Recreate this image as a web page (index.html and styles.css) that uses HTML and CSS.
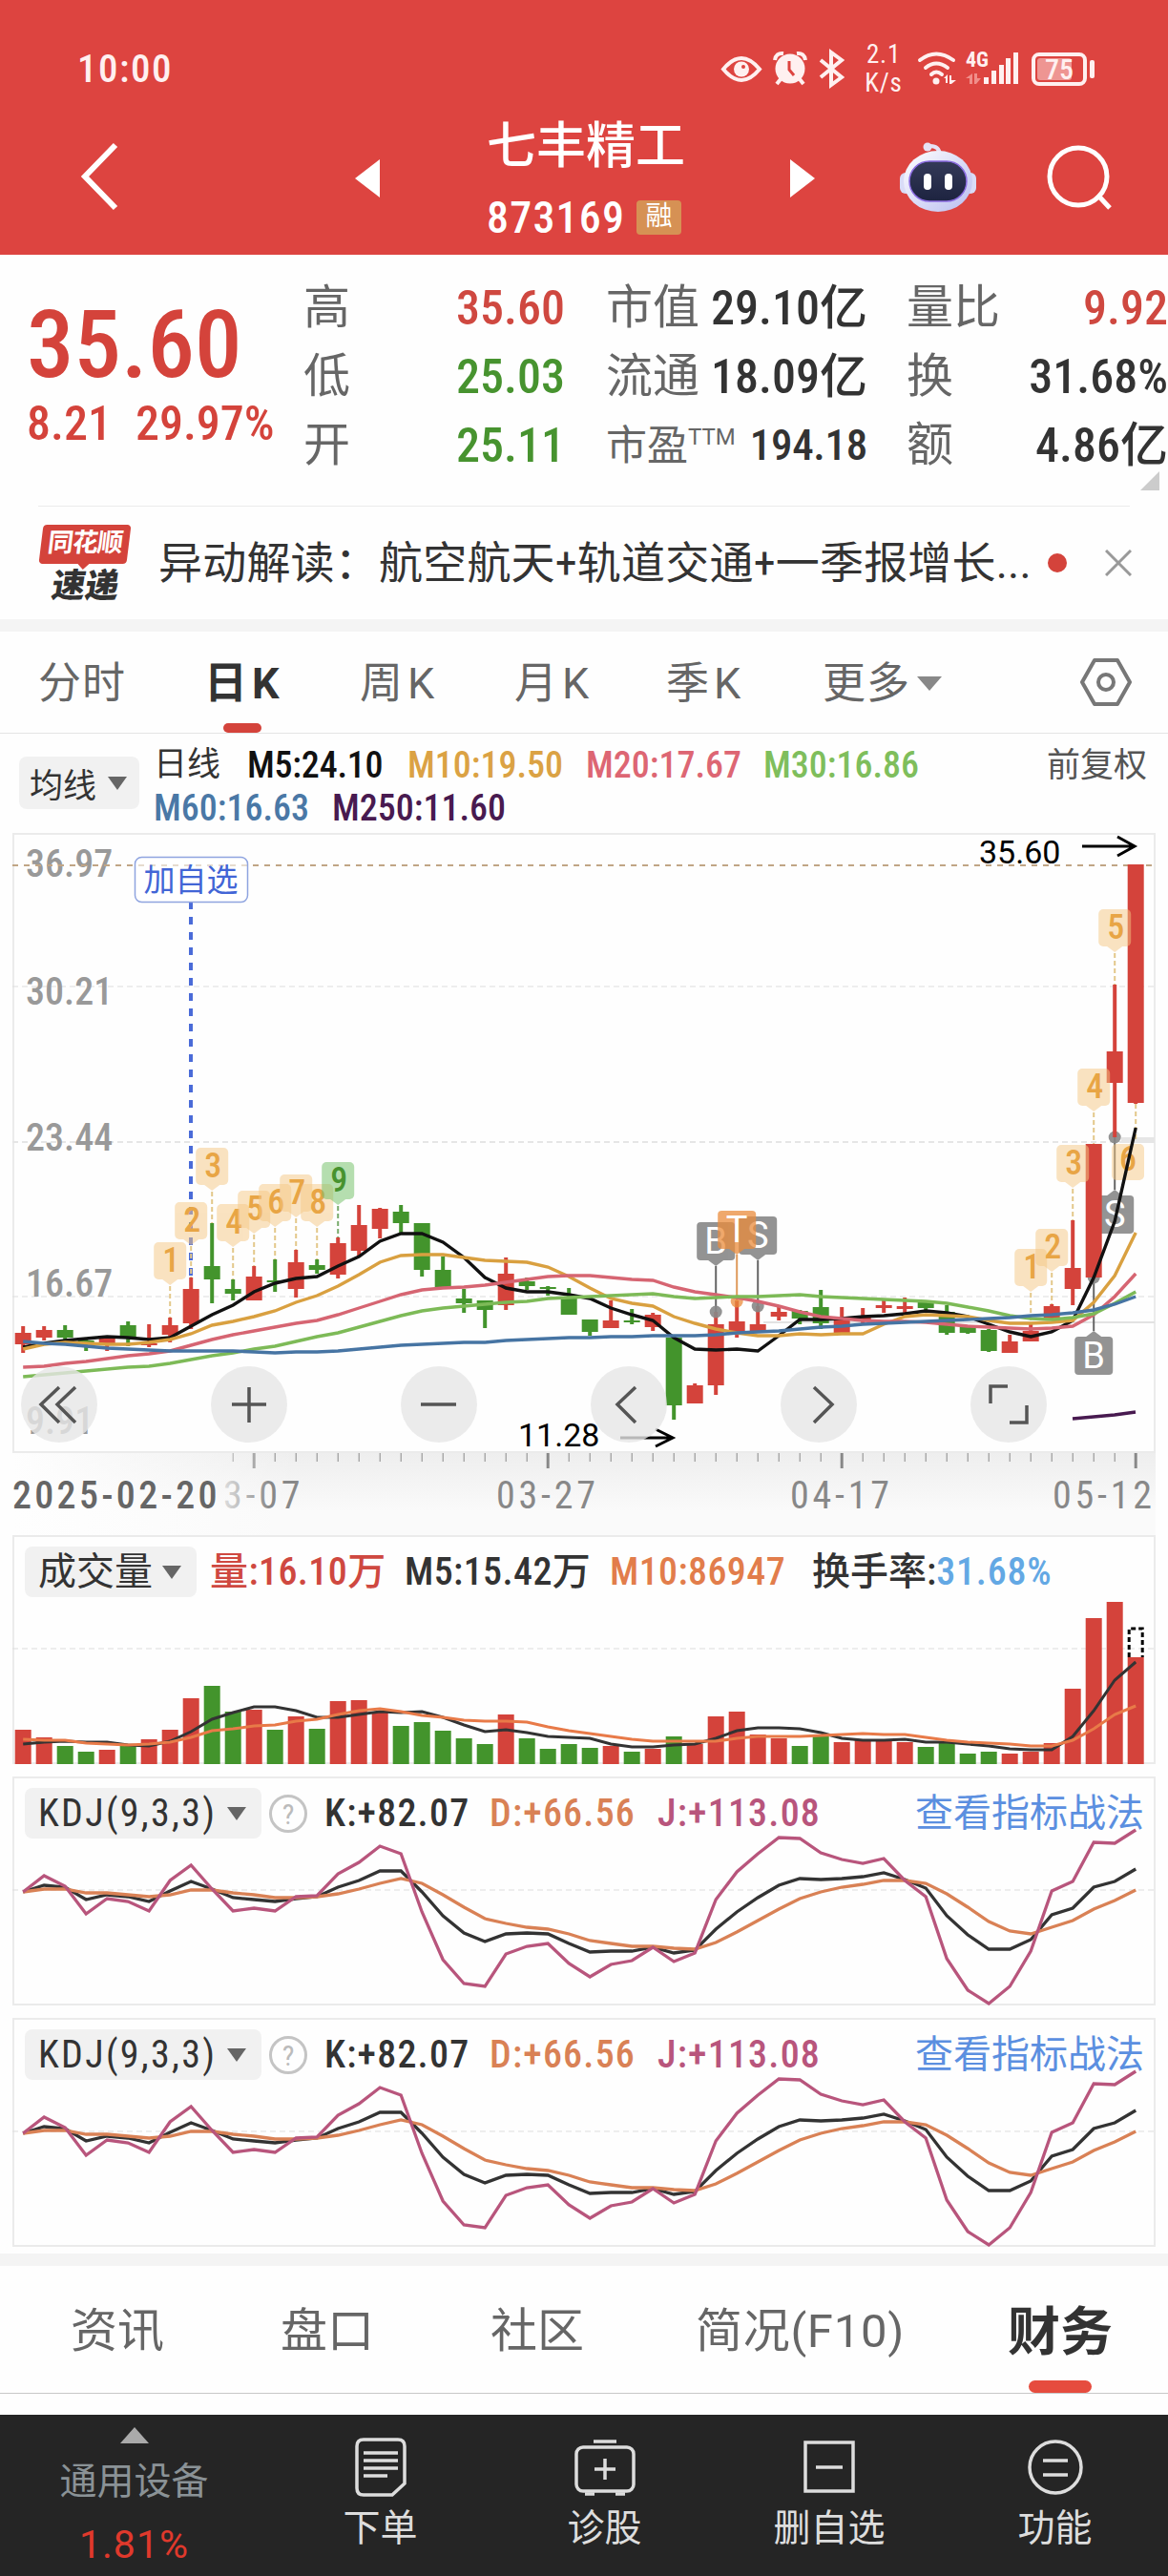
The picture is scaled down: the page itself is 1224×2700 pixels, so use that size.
FILE: index.html
```html
<!DOCTYPE html>
<html lang="zh-CN">
<head>
  <meta charset="utf-8">
  <title>七丰精工 873169</title>
  <link rel="stylesheet" href="styles.css">
</head>
<body>
  <header>
    <div class="status">
      <span class="clock">10:00</span>
      <svg class="sys-icons" width="180" height="50" viewBox="750 47 180 50">
        <path d="M757 72.500q19-23 38 0q-19 23-38 0z" fill="none" stroke="#fff0f0" stroke-width="4"/>
        <circle cx="776" cy="72.500" r="8" fill="#fff0f0"/><circle cx="778" cy="70" r="2" fill="#dd4440"/>
        <circle cx="827" cy="72" r="15.500" fill="#fff0f0"/>
        <path d="M811 63q1-8 9-7M843 63q-1-8-9-7M817 83l-4 5M837 83l4 5" fill="none" stroke="#fff0f0" stroke-width="4"/>
        <path d="M826 64v9l5 6" fill="none" stroke="#dd4440" stroke-width="3"/>
        <path d="M859 63l22 18l-11 8v-34l11 8l-22 18" fill="none" stroke="#fff0f0" stroke-width="4"/>
      </svg>
      <span class="speed">2.1<br>K/s</span>
      <svg class="sys-icons" width="110" height="50" viewBox="958 47 110 50">
        <g fill="none" stroke="#fff0f0" stroke-width="4" stroke-linecap="round">
          <path d="M963 63q17-13 35 0M969 71q11-9 23 0M975 78q5-5 11 0"/>
        </g>
        <circle cx="980" cy="85" r="3.500" fill="#fff0f0"/>
        <path d="M988 82l4-4v9h-2v-5zM994 79h2v5h5l-5 4h-2z" fill="#fff0f0"/>
        <path d="M1011 82l7-5v11h-3v-6zM1020 77h3v5h4l-5 6h-2z" fill="#f08e8a"/>
        <path d="M1030 81h5v7h-5zM1038 74h5v14h-5zM1046 68h5v20h-5zM1053 61h5v27h-5zM1061 55h5v33h-5z" fill="#fff0f0"/>
        <text class="net" x="1011" y="70">4G</text>
      </svg>
      <span class="battery"><i></i><b>75</b></span>
    </div>
    <div class="title-row">
      <svg class="back" width="44" height="74" viewBox="0 0 44 74"><path d="M38 4L6 37l32 33" fill="none" stroke="#fff" stroke-width="6"/></svg>
      <svg class="prev" width="26" height="40" viewBox="0 0 26 40"><path d="M26 0v40L0 20z" fill="#fff"/></svg>
      <div class="stock">
        <h1>七丰精工</h1>
        <div class="code">873169<span class="rong">融</span></div>
      </div>
      <svg class="next" width="26" height="40" viewBox="0 0 26 40"><path d="M0 0v40l26-20z" fill="#fff"/></svg>
      <svg class="robot" width="80" height="76" viewBox="0 0 80 76">
        <defs>
          <linearGradient id="shell" x1="0" y1="0" x2="1" y2="1"><stop offset="0" stop-color="#fff"/><stop offset="1" stop-color="#b9bdf0"/></linearGradient>
          <linearGradient id="face" x1="0" y1="0" x2="0" y2="1"><stop offset="0" stop-color="#343a58"/><stop offset="1" stop-color="#1d2340"/></linearGradient>
        </defs>
        <path d="M30 6q11-1 12 9" fill="none" stroke="#e6e2f5" stroke-width="4"/>
        <circle cx="29" cy="7" r="4.500" fill="#e6e2f5"/>
        <rect x="0" y="34" width="12" height="22" rx="6" fill="#d9dcf7"/>
        <rect x="68" y="34" width="12" height="22" rx="6" fill="#d9dcf7"/>
        <ellipse cx="40" cy="43" rx="36" ry="32" fill="url(#shell)"/>
        <rect x="10" y="22" width="60" height="42" rx="21" fill="url(#face)" stroke="#8a6be0" stroke-width="1.500"/>
        <rect x="25" y="35" width="8" height="17" rx="4" fill="#fff"/>
        <rect x="47" y="35" width="8" height="17" rx="4" fill="#fff"/>
      </svg>
      <svg class="search" width="70" height="70" viewBox="0 0 70 70"><circle cx="34" cy="33" r="30" fill="none" stroke="#fff" stroke-width="5"/><path d="M54 52l13 14" stroke="#fff" stroke-width="5"/></svg>
    </div>
  </header>

  <section class="quote">
    <div class="last">
      <div class="price">35.60</div>
      <div class="change"><span>8.21</span><span>29.97%</span></div>
    </div>
    <dl class="col-a">
      <dt>高</dt><dd class="up">35.60</dd>
      <dt>低</dt><dd class="down">25.03</dd>
      <dt>开</dt><dd class="down">25.11</dd>
    </dl>
    <dl class="col-b">
      <dt>市值</dt><dd>29.10亿</dd>
      <dt>流通</dt><dd>18.09亿</dd>
      <dt class="pe">市盈<sup>TTM</sup></dt><dd class="pe">194.18</dd>
    </dl>
    <dl class="col-c">
      <dt>量比</dt><dd class="up">9.92</dd>
      <dt>换</dt><dd>31.68%</dd>
      <dt>额</dt><dd>4.86亿</dd>
    </dl>
    <i class="corner"></i>
  </section>

  <section class="news">
    <div class="logo"><span class="bubble"><em>同花顺</em></span><span class="sudi">速递</span></div>
    <p>异动解读：航空航天+轨道交通+一季报增长...</p>
    <i class="dot"></i>
    <svg width="28" height="28" viewBox="0 0 28 28"><path d="M1 1l26 26M27 1L1 27" stroke="#999" stroke-width="3"/></svg>
  </section>

  <nav class="periods">
    <span class="p1">分时</span>
    <span class="p2 active">日K</span>
    <span class="p3">周K</span>
    <span class="p4">月K</span>
    <span class="p5">季K</span>
    <span class="p6">更多<i class="tri"></i></span>
    <svg width="54" height="52" viewBox="0 0 54 52"><path d="M15 3h24l13 23l-13 23H15L2 26z" fill="none" stroke="#777" stroke-width="4" stroke-linejoin="round"/><circle cx="27" cy="26" r="8" fill="none" stroke="#777" stroke-width="4"/></svg>
  </nav>

  <section class="legend">
    <span class="picker">均线<i class="tri"></i></span>
    <div class="ma">
      <div><span class="line-name">日线</span><span class="m5">M5:24.10</span><span class="m10">M10:19.50</span><span class="m20">M20:17.67</span><span class="m30">M30:16.86</span></div>
      <div><span class="m60">M60:16.63</span><span class="m250">M250:11.60</span></div>
    </div>
    <span class="fq">前复权</span>
  </section>

  <main>
    <svg id="kline" width="1198" height="650" viewBox="13 873 1198 650"></svg>
    <svg id="axis" width="1198" height="86" viewBox="13 1523 1198 86"></svg>

    <div class="panel">
      <svg id="volume" width="1198" height="240" viewBox="13 1609 1198 240"></svg>
      <div class="panel-head">
        <span class="picker vol">成交量<i class="tri"></i></span>
        <span class="v-now">量:16.10万</span><span class="v-m5">M5:15.42万</span><span class="v-m10">M10:86947</span><span class="v-rate">换手率:<b>31.68%</b></span>
      </div>
    </div>
    <div class="panel">
      <svg class="kdj" width="1198" height="240" viewBox="13 1862 1198 240"></svg>
      <div class="panel-head">
        <span class="picker kdj-name">KDJ(9,3,3)<i class="tri"></i></span><span class="help">?</span>
        <span class="k">K:+82.07</span><span class="d">D:+66.56</span><span class="j">J:+113.08</span>
        <a>查看指标战法</a>
      </div>
    </div>
    <div class="panel">
      <svg class="kdj" width="1198" height="240" viewBox="13 1862 1198 240"></svg>
      <div class="panel-head">
        <span class="picker kdj-name">KDJ(9,3,3)<i class="tri"></i></span><span class="help">?</span>
        <span class="k">K:+82.07</span><span class="d">D:+66.56</span><span class="j">J:+113.08</span>
        <a>查看指标战法</a>
      </div>
    </div>
  </main>

  <nav class="info-tabs">
    <span>资讯</span><span>盘口</span><span>社区</span><span class="f10">简况(F10)</span><span class="active">财务</span>
  </nav>

  <footer>
    <div class="sector"><i></i><span>通用设备</span><b>1.81%</b></div>
    <div class="item">
      <svg width="54" height="62" viewBox="0 0 54 62"><path d="M9 2h36q7 0 7 7v39L39 60H9q-7 0-7-7V9q0-7 7-7z"/><path d="M9 16h36M9 24h36M9 32h36M9 40h25"/></svg>
      <span>下单</span>
    </div>
    <div class="item">
      <svg width="64" height="62" viewBox="0 0 64 62"><rect x="2" y="10" width="60" height="46" rx="7"/><path d="M20 4h24M32 22v22M21 33h22M11 59h10M43 59h10"/></svg>
      <span>诊股</span>
    </div>
    <div class="item">
      <svg width="54" height="62" viewBox="0 0 54 62"><rect x="2" y="5" width="50" height="51"/><path d="M13 31h28"/></svg>
      <span>删自选</span>
    </div>
    <div class="item">
      <svg width="60" height="62" viewBox="0 0 60 62"><circle cx="30" cy="31" r="27"/><path d="M17 24h26M17 39h26"/></svg>
      <span>功能</span>
    </div>
  </footer>
  <script src="app.js"></script>
</body>
</html>
```
FILE: styles.css
```css
* {
  box-sizing: border-box;
}
body {
  margin: 0;
  width: 1224px;
  height: 2700px;
  overflow: hidden;
  background-color: #fefefe;
  color: #333;
  font-family: Roboto, "Noto Sans CJK SC", sans-serif;
  font-stretch: 82%;
  font-weight: 400;
  white-space: nowrap;
}
svg {
  display: block;
  flex: none;
}
span, i, a {
  flex: none;
}
b, i, em {
  font-weight: inherit;
  font-style: normal;
}

/* header */
header {
  height: 267px;
  background-color: #dd4440;
  color: #fff;
}
.status {
  display: flex;
  align-items: center;
  height: 144px;
  padding-left: 81px;
  color: #fff0f0;
}
.clock {
  width: 670px;
  font-size: 41px;
  font-weight: 500;
  letter-spacing: 1.5px;
}
.speed {
  width: 52px;
  margin-left: -31px;
  margin-right: 7px;
  font-size: 27px;
  line-height: 30px;
  text-align: center;
  letter-spacing: 0.8px;
}
.net {
  font-size: 22px;
  font-weight: 700;
  fill: #fff0f0;
  font-stretch: 75%;
}
.battery {
  position: relative;
  width: 58px;
  height: 35px;
  margin-left: 12px;
  border: 4px solid #fff0f0;
  border-radius: 8px;
  text-align: center;
  font-size: 30px;
  line-height: 28px;
}
.battery i {
  position: absolute;
  left: 2px;
  top: 2px;
  width: 36px;
  height: 23px;
  border-radius: 3px;
  background-color: #ee9592;
}
.battery b {
  position: relative;
  font-weight: 500;
}
.battery::after {
  content: "";
  position: absolute;
  left: 57px;
  top: 4px;
  width: 5px;
  height: 19px;
  border-radius: 2px;
  background-color: #fff0f0;
}
.title-row {
  display: flex;
  height: 123px;
}
.back {
  margin: 4px 0 0 83px;
}
.prev {
  margin: 23px 0 0 245px;
}
.stock {
  width: 204px;
  margin-left: 112px;
}
.stock h1 {
  margin: -22px 0 0;
  font-size: 52px;
  line-height: 64px;
  font-weight: 500;
}
.code {
  display: flex;
  align-items: center;
  margin-top: 18px;
  height: 48px;
  font-size: 46px;
  font-weight: 500;
  letter-spacing: 1.2px;
}
.rong {
  width: 47px;
  height: 36px;
  margin-left: auto;
  border-radius: 4px;
  background-color: #d69154;
  font-size: 28px;
  font-weight: 400;
  line-height: 34px;
  text-align: center;
  letter-spacing: 0;
}
.next {
  margin: 23px 0 0 114px;
}
.robot {
  margin: 3px 0 0 89px;
}
.search {
  margin: 8px 0 0 73px;
}

/* quote */
.quote {
  position: relative;
  display: flex;
  height: 263px;
  padding-top: 20px;
}
.last {
  width: 318px;
  padding-left: 28px;
  color: #d4433b;
}
.price {
  margin-top: 18px;
  font-size: 99px;
  line-height: 112px;
  font-weight: 500;
}
.change {
  display: flex;
  gap: 25px;
  margin-top: 1px;
  font-size: 50px;
  font-weight: 500;
  line-height: 52px;
}
dl {
  display: grid;
  grid-template-columns: 0 1fr;
  grid-auto-rows: 72px;
  margin: 0;
  line-height: 72px;
}
dt {
  font-size: 49px;
  color: #666;
}
dd {
  margin: 0;
  font-size: 50px;
  font-weight: 500;
  text-align: right;
}
dt.pe {
  font-size: 43px;
}
dd.pe {
  font-size: 45px;
  letter-spacing: -0.3px;
}
sup {
  font-size: 24px;
  font-stretch: 100%;
  line-height: 0;
  vertical-align: 16px;
}
.col-a { width: 274px; }
.col-b { width: 274px; margin-left: 43px; }
.col-c { width: 274px; margin-left: 41px; }
.up { color: #cf4840; }
.down { color: #47932f; }
.corner {
  position: absolute;
  right: 9px;
  bottom: 16px;
  border-left: 20px solid transparent;
  border-bottom: 20px solid #ccc;
}

/* news */
.news {
  display: flex;
  align-items: center;
  height: 132px;
  padding: 0 37px 0 41px;
  border-bottom: 13px solid #f4f4f4;
  background: linear-gradient(#ebebeb, #ebebeb) 40px 0 / 1144px 1px no-repeat;
}
.logo {
  width: 97px;
  height: 84px;
  margin-top: 4px;
  text-align: center;
}
.bubble {
  position: relative;
  display: block;
  width: 92px;
  height: 41px;
  margin-left: 2px;
  border-radius: 4px;
  background-color: #d4433b;
  color: #fff;
  font-size: 27px;
  font-weight: 700;
  line-height: 39px;
  letter-spacing: -1px;
  transform: skewX(-7deg);
}
.bubble::after {
  content: "";
  position: absolute;
  left: 41px;
  top: 41px;
  border: 6px solid transparent;
  border-top-color: #d4433b;
}
.sudi {
  display: block;
  margin-top: 5px;
  font-size: 35px;
  font-weight: 900;
  line-height: 38px;
  transform: skewX(-9deg);
}
.news p {
  width: 932px;
  margin: 0 0 8px 28px;
  font-size: 46px;
  letter-spacing: 0.2px;
}
.dot {
  width: 20px;
  height: 20px;
  border-radius: 10px;
  background-color: #d4433b;
}
.news > svg {
  margin-left: 40px;
}

/* period tabs */
.periods {
  display: flex;
  align-items: center;
  height: 107px;
  padding: 0 0 5px 40px;
  border-bottom: 1px solid #e4e4e4;
  font-size: 45px;
  font-stretch: 95%;
  color: #666;
  letter-spacing: 5px;
}
.tri {
  display: inline-block;
  border: 10px solid transparent;
  border-top: 14px solid #666;
  border-bottom: 0;
}
.periods .tri {
  margin: 0 0 8px 7px;
  border-width: 15px 13px 0;
  border-top-color: #888;
}
.periods svg {
  margin-top: 5px;
}
.p1 { width: 174px; }
.p2 { width: 163px; }
.p3 { width: 162px; }
.p4 { width: 159px; }
.p5 { width: 164px; }
.p6 { width: 270px; }
.periods .p1, .periods .p6 { letter-spacing: 1px; }
.periods .active {
  position: relative;
  color: #333;
  font-weight: 700;
}
.periods .active::after {
  content: "";
  position: absolute;
  left: 20px;
  bottom: -23px;
  width: 40px;
  height: 10px;
  border-radius: 5px;
  background-color: #d4433b;
}

/* moving average legend */
.legend {
  display: flex;
  height: 104px;
}
.picker {
  display: flex;
  align-items: center;
  justify-content: space-between;
  background-color: #f1f1f1;
  border-radius: 8px;
}
.legend .picker {
  width: 126px;
  height: 55px;
  margin: 24px 0 0 20px;
  padding: 0 13px 0 11px;
  font-size: 35px;
}
.ma {
  width: 951px;
  padding: 11px 0 0 15px;
  font-size: 38px;
  font-weight: 500;
  line-height: 45px;
}
.ma div {
  display: flex;
}
.ma .line-name {
  width: 98px;
  font-size: 35px;
  line-height: 43px;
  font-weight: 400;
}
.ma .m5 { width: 168px; color: #111; letter-spacing: -0.2px; }
.m10 { width: 187px; color: #dba244; }
.m20 { width: 186px; color: #dd6673; }
.m30 { color: #7fbe5c; }
.m60 { width: 187px; color: #4a78a6; }
.m250 { color: #481a50; }
.fq {
  padding-top: 10px;
  font-size: 35px;
  line-height: 47px;
  color: #555;
}

/* charts */
main {
  width: 1198px;
  margin-left: 13px;
}
main polyline, main path {
  fill: none;
}
.scale { font-size: 40px; fill: #999; font-weight: 500; }
.extreme { font-size: 34px; fill: #000; font-stretch: 95%; }
.tag-num { font-size: 36px; font-weight: 500; fill: #e8a545; text-anchor: middle; }
.tag-num.nine { fill: #47932f; }
.tag-bs { font-size: 38px; fill: #fff; text-anchor: middle; font-stretch: 95%; }
.watch { font-size: 33px; fill: #4265d6; text-anchor: middle; }
.date { font-size: 40px; fill: #888; letter-spacing: 3.8px; }
.date.first { fill: #666; font-weight: 500; letter-spacing: 3.3px; }
#axis {
  background: linear-gradient(90deg, #fefefe, rgba(254, 254, 254, 0) 25%), linear-gradient(#eee, #fafafa 70%);
}
.panel {
  position: relative;
  height: 240px;
  margin-bottom: 13px;
}
.panel:last-child {
  margin-bottom: 7px;
}
.panel svg {
  position: absolute;
  left: 0;
  top: 0;
}
.panel-head {
  position: relative;
  display: flex;
  padding: 12px 0 0 13px;
  font-size: 40px;
  font-stretch: 86%;
  line-height: 53px;
}
.panel-head .picker {
  height: 53px;
  padding: 0 16px 0 14px;
}
.vol {
  width: 180px;
  margin-right: 14px;
}
.v-now { width: 204px; color: #cf4840; }
.v-m5 { width: 215px; }
.v-m10 { width: 212px; color: #e27d4b; }
.v-now, .v-m5, .v-m10, .v-rate, .k, .d, .j { font-weight: 500; }
.v-now, .v-m5, .v-m10 { letter-spacing: 0.4px; }
.v-rate b { color: #63a8e4; letter-spacing: 0.8px; }
.kdj-name {
  width: 248px;
  letter-spacing: 2.3px;
}
.help {
  width: 40px;
  height: 40px;
  margin: 7px 18px 0 8px;
  border: 3px solid #c4c4c4;
  border-radius: 20px;
  color: #bbb;
  font-size: 30px;
  line-height: 35px;
  text-align: center;
}
.k, .d, .j { letter-spacing: 1.2px; }
.k { width: 173px; }
.d { width: 176px; color: #d98155; }
.j { width: 270px; color: #b8557c; }
.panel-head a { color: #5b8fe0; }

/* info tabs */
.info-tabs {
  display: grid;
  grid-template-columns: 220px 220px 215px 327px 1fr;
  align-items: center;
  height: 147px;
  padding: 0 0 6px 74px;
  border-top: 13px solid #f4f4f4;
  border-bottom: 1px solid #c8c8c8;
  font-size: 49px;
  color: #666;
}
.info-tabs .f10 {
  font-stretch: 100%;
  letter-spacing: 0.7px;
}
.info-tabs .active {
  position: relative;
  font-size: 55px;
  font-weight: 700;
  color: #333;
}
.info-tabs .active::after {
  content: "";
  position: absolute;
  left: 22px;
  bottom: -29px;
  width: 66px;
  height: 13px;
  border-radius: 7px;
  background-color: #e64c3e;
}

/* bottom bar */
footer {
  display: grid;
  grid-template-columns: 281px 235px 235px 236px 237px;
  height: 169px;
  margin-top: 22px;
  background-color: #252525;
  color: #ddd;
}
.sector {
  display: flex;
  flex-direction: column;
  align-items: center;
  padding-top: 13px;
  font-size: 39px;
  color: #8a9296;
}
.sector i {
  border: 15px solid transparent;
  border-top: 0;
  border-bottom: 17px solid #aaa;
}
.sector span {
  margin-top: 9px;
  line-height: 62px;
}
.sector b {
  margin-top: 3px;
  color: #e0392c;
  font-size: 41px;
  font-stretch: 90%;
  line-height: 64px;
  letter-spacing: 1px;
}
.item {
  display: flex;
  flex-direction: column;
  align-items: center;
  padding-top: 24px;
  font-size: 39px;
  line-height: 66px;
}
.item svg {
  fill: none;
  stroke: #ddd;
  stroke-width: 3.500px;
}
```
FILE: app.js
```js
const RED = "#d4433b", GREEN = "#43942c";
const STEP = 22, X0 = 24.2;
const x = i => X0 + STEP * i;

// direction, high, body top, body bottom, low
const candles = [
  ["r",1390,1397,1409,1418],["r",1390,1394,1402,1405],["g",1389,1394,1402,1405],["g",1403,1405,1407,1416],["r",1400,1402,1409,1416],["g",1385,1389,1402,1411],
  ["r",1388,1408,1410,1412],["r",1381,1389,1399,1407],["r",1339,1351,1387,1393],["g",1282,1327,1341,1366],["g",1341,1351,1356,1363],["r",1327,1338,1363,1363],
  ["g",1320,1342,1344,1354],["r",1310,1323,1351,1360],["g",1320,1326,1331,1335],["r",1297,1303,1336,1340],["r",1263,1284,1311,1316],["r",1266,1267,1288,1298],
  ["g",1263,1270,1282,1292],["g",1282,1282,1331,1338],["g",1317,1331,1349,1349],["g",1351,1361,1366,1376],["g",1363,1363,1373,1392],["r",1318,1335,1368,1373],
  ["g",1339,1343,1348,1352],["g",1348,1349,1351,1358],["g",1350,1360,1378,1378],["g",1383,1383,1396,1400],["r",1363,1384,1392,1392],["g",1372,1384,1386,1388],
  ["r",1376,1378,1391,1395],["g",1402,1402,1473,1488],["r",1450,1452,1471,1471],["r",1375,1388,1452,1462],["r",1363,1385,1397,1402],["r",1369,1388,1395,1395],
  ["r",1370,1375,1380,1384],["g",1373,1374,1382,1388],["g",1352,1370,1387,1393],["r",1370,1383,1397,1397],["r",1371,1380,1384,1387],["r",1363,1368,1371,1376],
  ["r",1360,1369,1372,1376],["g",1363,1365,1371,1373],["g",1368,1375,1397,1399],["g",1390,1391,1397,1398],["g",1393,1394,1416,1417],["r",1399,1406,1418,1418],
  ["r",1388,1395,1406,1406],["r",1367,1369,1384,1384],["r",1279,1329,1351,1368],["r",1199,1199,1339,1339],["r",1032,1102,1135,1192],["r",906,906,1156,1157]
];
const ma = {
  "#111": [1412,1408,1405,1403,1401,1402,1404,1402,1390,1378,1368,1354,1345,1340,1338,1327,1317,1301,1293,1293,1302,1318,1339,1350,1354,1354,1357,1361,1371,1378,1384,1402,1414,1415,1414,1416,1400,1383,1383,1382,1380,1379,1377,1374,1376,1380,1388,1396,1401,1396,1384,1339,1280,1182],
  "#d9a040": [1414,1409,1407,1408,1409,1409,1407,1404,1398,1389,1385,1380,1374,1365,1358,1348,1336,1323,1316,1315,1315,1318,1321,1322,1323,1328,1338,1350,1361,1366,1369,1380,1387,1393,1397,1400,1400,1398,1399,1398,1398,1388,1380,1378,1379,1380,1384,1387,1387,1386,1384,1365,1337,1292],
  "#d66572": [1433,1432,1429,1427,1424,1421,1419,1416,1410,1404,1399,1395,1391,1387,1384,1378,1371,1364,1357,1352,1350,1349,1347,1344,1341,1338,1337,1337,1339,1341,1342,1349,1354,1357,1360,1364,1369,1375,1380,1382,1384,1385,1385,1386,1388,1390,1391,1392,1393,1392,1390,1378,1359,1335],
  "#7dba57": [1443,1441,1439,1437,1435,1433,1432,1429,1425,1421,1418,1414,1411,1406,1401,1397,1391,1385,1379,1374,1371,1369,1367,1365,1364,1361,1360,1359,1358,1357,1356,1359,1361,1360,1359,1359,1358,1357,1359,1360,1361,1362,1363,1364,1366,1370,1374,1379,1382,1383,1381,1377,1366,1354],
  "#4674a3": [1406,1408,1409,1411,1413,1414,1415,1416,1416,1416,1416,1417,1418,1417,1417,1416,1414,1412,1410,1409,1408,1407,1407,1405,1404,1403,1402,1402,1401,1401,1400,1400,1400,1399,1397,1396,1395,1393,1391,1390,1388,1387,1386,1385,1384,1383,1382,1381,1379,1378,1376,1373,1367,1359]
};
const vol = [1813,1821,1830,1836,1834,1830,1823,1813,1780,1767,1794,1792,1813,1799,1812,1783,1782,1794,1809,1805,1814,1822,1828,1797,1822,1833,1828,1832,1830,1836,1833,1820,1828,1799,1794,1818,1822,1830,1820,1826,1824,1825,1826,1831,1827,1838,1836,1838,1836,1827,1770,1696,1679,1737];
const volMa = {
  "#333": [1828,1826,1825,1826,1826,1829,1830,1825,1815,1802,1795,1789,1789,1793,1800,1800,1797,1794,1795,1794,1800,1808,1815,1813,1816,1820,1821,1822,1828,1831,1831,1829,1828,1822,1814,1811,1811,1812,1816,1822,1824,1824,1823,1826,1826,1828,1830,1833,1834,1834,1820,1793,1761,1742],
  "#e87a48": [1823,1824,1824,1827,1828,1829,1828,1826,1821,1814,1812,1809,1808,1804,1802,1797,1793,1791,1794,1798,1800,1803,1804,1804,1805,1810,1814,1817,1820,1823,1825,1825,1825,1825,1822,1820,1820,1820,1819,1818,1817,1818,1818,1821,1824,1826,1827,1828,1830,1830,1824,1812,1797,1788]
};
const kdj = {
  "#333": [1983,1976,1978,1991,1986,1988,1993,1982,1972,1980,1989,1991,1993,1990,1988,1978,1971,1961,1961,1983,2008,2026,2035,2027,2026,2027,2037,2046,2045,2045,2041,2047,2044,2022,2004,1989,1976,1969,1970,1969,1967,1963,1970,1979,2008,2028,2043,2043,2033,2007,2000,1978,1972,1959],
  "#d98155": [1983,1980,1980,1984,1984,1986,1988,1986,1981,1981,1984,1986,1989,1989,1988,1985,1980,1974,1969,1974,1986,1999,2011,2016,2020,2022,2027,2034,2037,2040,2040,2042,2043,2036,2025,2013,2001,1990,1983,1978,1975,1971,1971,1974,1985,1999,2014,2024,2027,2020,2013,2001,1992,1981],
  "#b8557c": [1983,1966,1977,2006,1990,1993,2003,1971,1955,1980,2003,2000,2003,1988,1987,1964,1952,1935,1943,2004,2054,2079,2082,2048,2040,2037,2058,2072,2059,2055,2041,2056,2047,1991,1962,1943,1926,1927,1942,1949,1953,1948,1971,1988,2053,2086,2100,2082,2045,1982,1972,1931,1932,1918]
};

const rect = (x, y, w, h, fill, more = "") => `<rect x="${x}" y="${y}" width="${w}" height="${h}" fill="${fill}" ${more}/>`;
const line = (x1, y1, x2, y2, stroke, w, dash = "") => `<line x1="${x1}" y1="${y1}" x2="${x2}" y2="${y2}" stroke="${stroke}" stroke-width="${w}" stroke-dasharray="${dash}"/>`;
const text = (x, y, cls, s) => `<text x="${x}" y="${y}" class="${cls}">${s}</text>`;
const lines = (set, w) => Object.entries(set).map(([c, ys]) =>
  `<polyline points="${ys.map((y, i) => x(i) + "," + y).join(" ")}" stroke="${c}" stroke-width="${w}"/>`).join("");
const frame = (y, h) => rect(14, y + 1, 1196, h - 2, "none", 'stroke="#ebebeb" stroke-width="2"');

// numbered tag above a candle
function numTag(i, top, n, to) {
  const c = x(i), fill = n == 9 ? "#6fbf63" : "#f5c884";
  return `<g fill="${fill}" opacity=".5">${rect(c - 17, top, 34, 39, fill, 'rx="5"')}<path style="fill:${fill}" d="M${c - 8} ${top + 39}h16l-8 6z"/></g>`
    + line(c, top + 46, c, to, n == 9 ? "#79ac6d" : "#e3c88a", 2, "5 3") + text(c + 1, top + 31, n == 9 ? "tag-num nine" : "tag-num", n);
}
// buy / sell / T tag, tied to its price dot
function tradeTag(i, top, s, dotY, below) {
  const c = x(i), fill = s == "T" ? "#ea8c3c" : "#888", edge = below ? top : top + 40;
  return line(c, dotY, c, below ? top - 6 : top + 46, s == "T" ? "#df9a5b" : "#666", 2)
    + `<g fill="${fill}" opacity="${s == "T" ? .75 : .9}"><circle cx="${c}" cy="${dotY}" r="6.500"/>${rect(c - 20, top, 40, 40, fill, 'rx="4"')}<path style="fill:${fill}" d="M${c - 8} ${edge}h16l-8 ${below ? -6 : 6}z"/></g>`
    + text(c, top + 33, "tag-bs", s);
}
function button(cx, d) {
  return `<circle cx="${cx}" cy="1472" r="40" fill="#e6e6e6" opacity=".8"/><path d="${d}" stroke="#555" stroke-width="3.500"/>`;
}

function drawKline() {
  let s = frame(873, 650);
  s += line(13, 1034, 1210, 1034, "#ddd", 1, "6 4") + line(13, 1197, 1210, 1197, "#e6e6e6", 2, "6 4") + line(13, 1359, 1210, 1359, "#ddd", 1, "6 4");
  s += line(800, 1386, 1210, 1386, "#e2e2e2", 2) + line(1175, 1195, 1210, 1195, "#e6e6e6", 6);
  [["36.97", 919], ["30.21", 1053], ["23.44", 1206], ["16.67", 1359], ["9.91", 1503]].forEach(([t, y]) => s += text(27, y, "scale", t));
  s += line(13, 907, 1210, 907, "#c0a585", 2, "6 6");
  s += line(200, 945, 200, 1337, "#4a6bd8", 4, "8 8");
  s += rect(141.500, 898.500, 118, 47, "rgba(255,255,255,.6)", 'rx="7" stroke="#8fa4e0" stroke-width="1.500"') + text(200, 934, "watch", "加自选");

  s += tradeTag(51, 1401, "B", 1339, true) + tradeTag(52, 1253, "S", 1192, true);
  candles.forEach(([d, hi, top, bottom, lo], i) => {
    const c = d == "r" ? RED : GREEN;
    s += line(x(i), hi, x(i), lo, c, 4) + rect(x(i) - 8.5, top, 17, bottom - top, c);
  });
  [[7,1302,1],[8,1260,2],[9,1203,3],[10,1262,4],[11,1248,5],[12,1241,6],[13,1231,7],[14,1241,8],[15,1218,9],[48,1309,1],[49,1288,2],[50,1200,3],[51,1120,4],[52,953,5]]
    .forEach(([i, top, n]) => s += numTag(i, top, n, candles[i][1]));
  s += rect(1165, 1199, 34, 38, "#f5c884", 'rx="5" opacity=".5"') + line(x(53), 1157, x(53), 1194, "#e3c88a", 2, "5 3") + text(1182, 1227, "tag-num", 6);
  s += tradeTag(33, 1281, "B", 1375) + tradeTag(35, 1275, "S", 1369) + tradeTag(34, 1269, "T", 1364);
  s += lines(ma, 3.4);
  s += '<polyline points="1124,1487 1146,1485 1168,1483 1190,1480" stroke="#481a50" stroke-width="3.500"/>';
  s += text(1026, 905, "extreme", "35.60") + '<path d="M1134 887h55M1171 877l18 10l-18 10" stroke="#000" stroke-width="3"/>';
  s += text(543, 1516, "extreme", "11.28") + '<path d="M650 1507h55M687 1498l18 9l-18 9" stroke="#000" stroke-width="3"/>';
  s += button(62, "M62 1454l-19 18l19 19M79 1454l-19 18l19 19") + button(261, "M243 1472h36M261 1454v37") + button(460, "M441 1472h37")
    + button(659, "M666 1454l-19 18l19 19") + button(858, "M853 1454l19 18l-19 19") + button(1057, "M1038 1471v-18h18M1058 1491h18v-18");
  document.getElementById("kline").innerHTML = s;
}

function drawAxis() {
  let s = "";
  for (let i = 10; i < 54; i++) {
    const big = (i - 11) % 14 == 0;
    s += line(x(i), 1523, x(i), big ? 1539 : 1532, i < 12 ? "#aaa" : "#888", big ? 3 : 1);
  }
  s += text(13, 1581, "date first", "2025-02-20")
    + '<linearGradient id="fade" x1="0" x2="1"><stop offset="0" stop-color="#ddd"/><stop offset=".6" stop-color="#888"/></linearGradient>'
    + '<text x="234" y="1581" class="date" style="fill:url(#fade)">3-07</text>'
    + text(520, 1581, "date", "03-27") + text(828, 1581, "date", "04-17") + text(1103, 1581, "date", "05-12");
  document.getElementById("axis").innerHTML = s;
}

function drawVolume() {
  let s = frame(1609, 240) + line(13, 1728, 1210, 1728, "#ddd", 1, "6 4");
  vol.forEach((y, i) => s += rect(x(i) - 8.5, y, 17, 1849 - y, candles[i][0] == "r" ? RED : GREEN));
  s += `<path d="M${x(53) - 7} 1737v-30h14v30" stroke="#000" stroke-width="3" stroke-dasharray="5 3"/>`;
  document.getElementById("volume").innerHTML = s + lines(volMa, 3);
}

function drawKdj() {
  const s = frame(1862, 240) + line(13, 1981, 1210, 1981, "#ddd", 1, "6 4") + lines(kdj, 3.3);
  document.querySelectorAll(".kdj").forEach(el => el.innerHTML = s);
}

drawKline();
drawAxis();
drawVolume();
drawKdj();
```
